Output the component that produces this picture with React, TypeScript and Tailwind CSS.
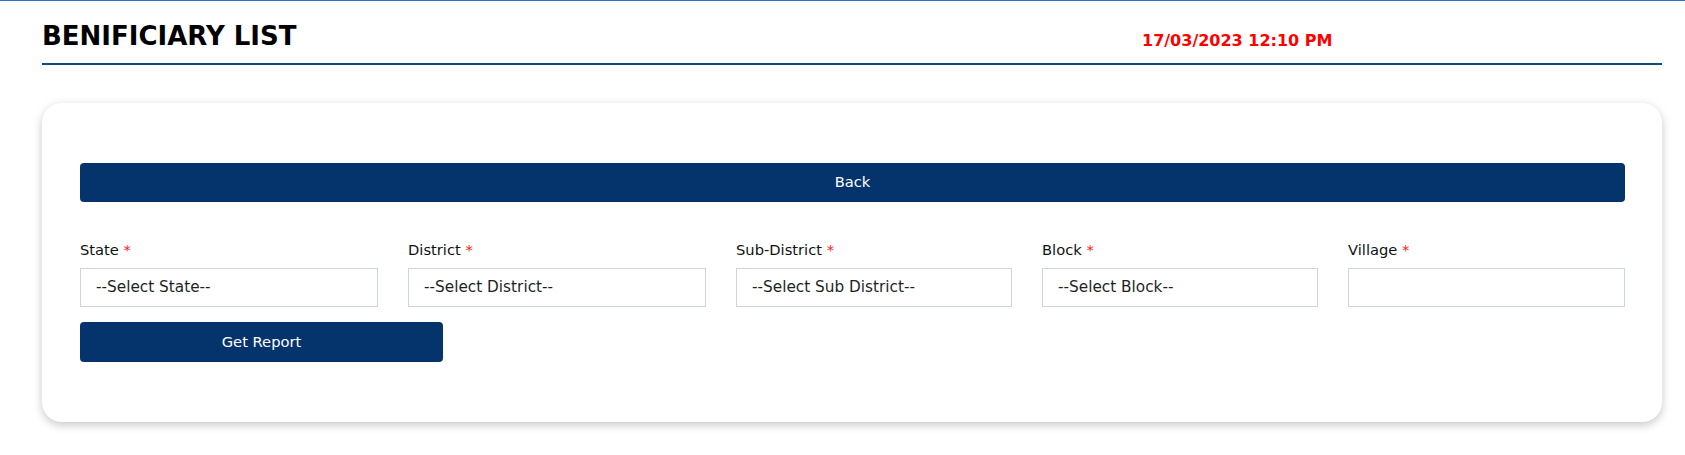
import React from "react";

type Field = {
    label: string;
    placeholder?: string;
};

const fields: Field[] = [
    { label: "State", placeholder: "--Select State--" },
    { label: "District", placeholder: "--Select District--" },
    { label: "Sub-District", placeholder: "--Select Sub District--" },
    { label: "Block", placeholder: "--Select Block--" },
    { label: "Village" },
];

const App: React.FC = () => {
    return (
        <div className="min-h-screen bg-white border-t border-[#2b6fc7] pl-[42px] pr-[23px] font-['DejaVu_Sans',Verdana,sans-serif]">
            {/* header */}
            <div className="flex items-start border-b-2 border-[#17467a] pt-[20px] pb-[12px]">
                <h1 className="flex-1 text-[26px] leading-[30px] font-bold text-black">BENIFICIARY LIST</h1>
                <span className="w-[520px] mt-[10px] text-[16px] leading-[20px] font-bold text-[#ff0000]">17/03/2023 12:10 PM</span>
            </div>

            {/* card */}
            <div className="mt-[38px] rounded-[20px] bg-white shadow-[0_3px_10px_rgba(0,0,0,0.22)] pt-[60px] pb-[60px] pl-[38px] pr-[37px]">
                <button className="w-full h-[39px] rounded-[4px] bg-[#05346d] text-white text-[14.7px] flex justify-center items-center">
                    Back
                </button>

                <div className="mt-[38px] grid grid-cols-[298px_298px_276px_276px_1fr] gap-x-[30px]">
                    {fields.map((f) => (
                        <div key={f.label} className="flex flex-col">
                            <label className="text-[14.7px] leading-[20px] text-[#111] mb-[8px]">
                                {f.label} <span className="text-[#ff1a1a]">*</span>
                            </label>
                            {f.placeholder ? (
                                <div className="h-[39px] border border-[#cfd4dc] bg-white px-[15px] flex items-center text-[15.3px] text-[#1f1f1f]">
                                    {f.placeholder}
                                </div>
                            ) : (
                                <input className="h-[39px] border border-[#cfd4dc] bg-white px-[15px] text-[15px] outline-none" />
                            )}
                        </div>
                    ))}
                </div>

                <button className="mt-[15px] w-[363px] h-[40px] rounded-[4px] bg-[#05346d] text-white text-[14.7px] flex justify-center items-center">
                    Get Report
                </button>
            </div>
        </div>
    );
};

export default App;
